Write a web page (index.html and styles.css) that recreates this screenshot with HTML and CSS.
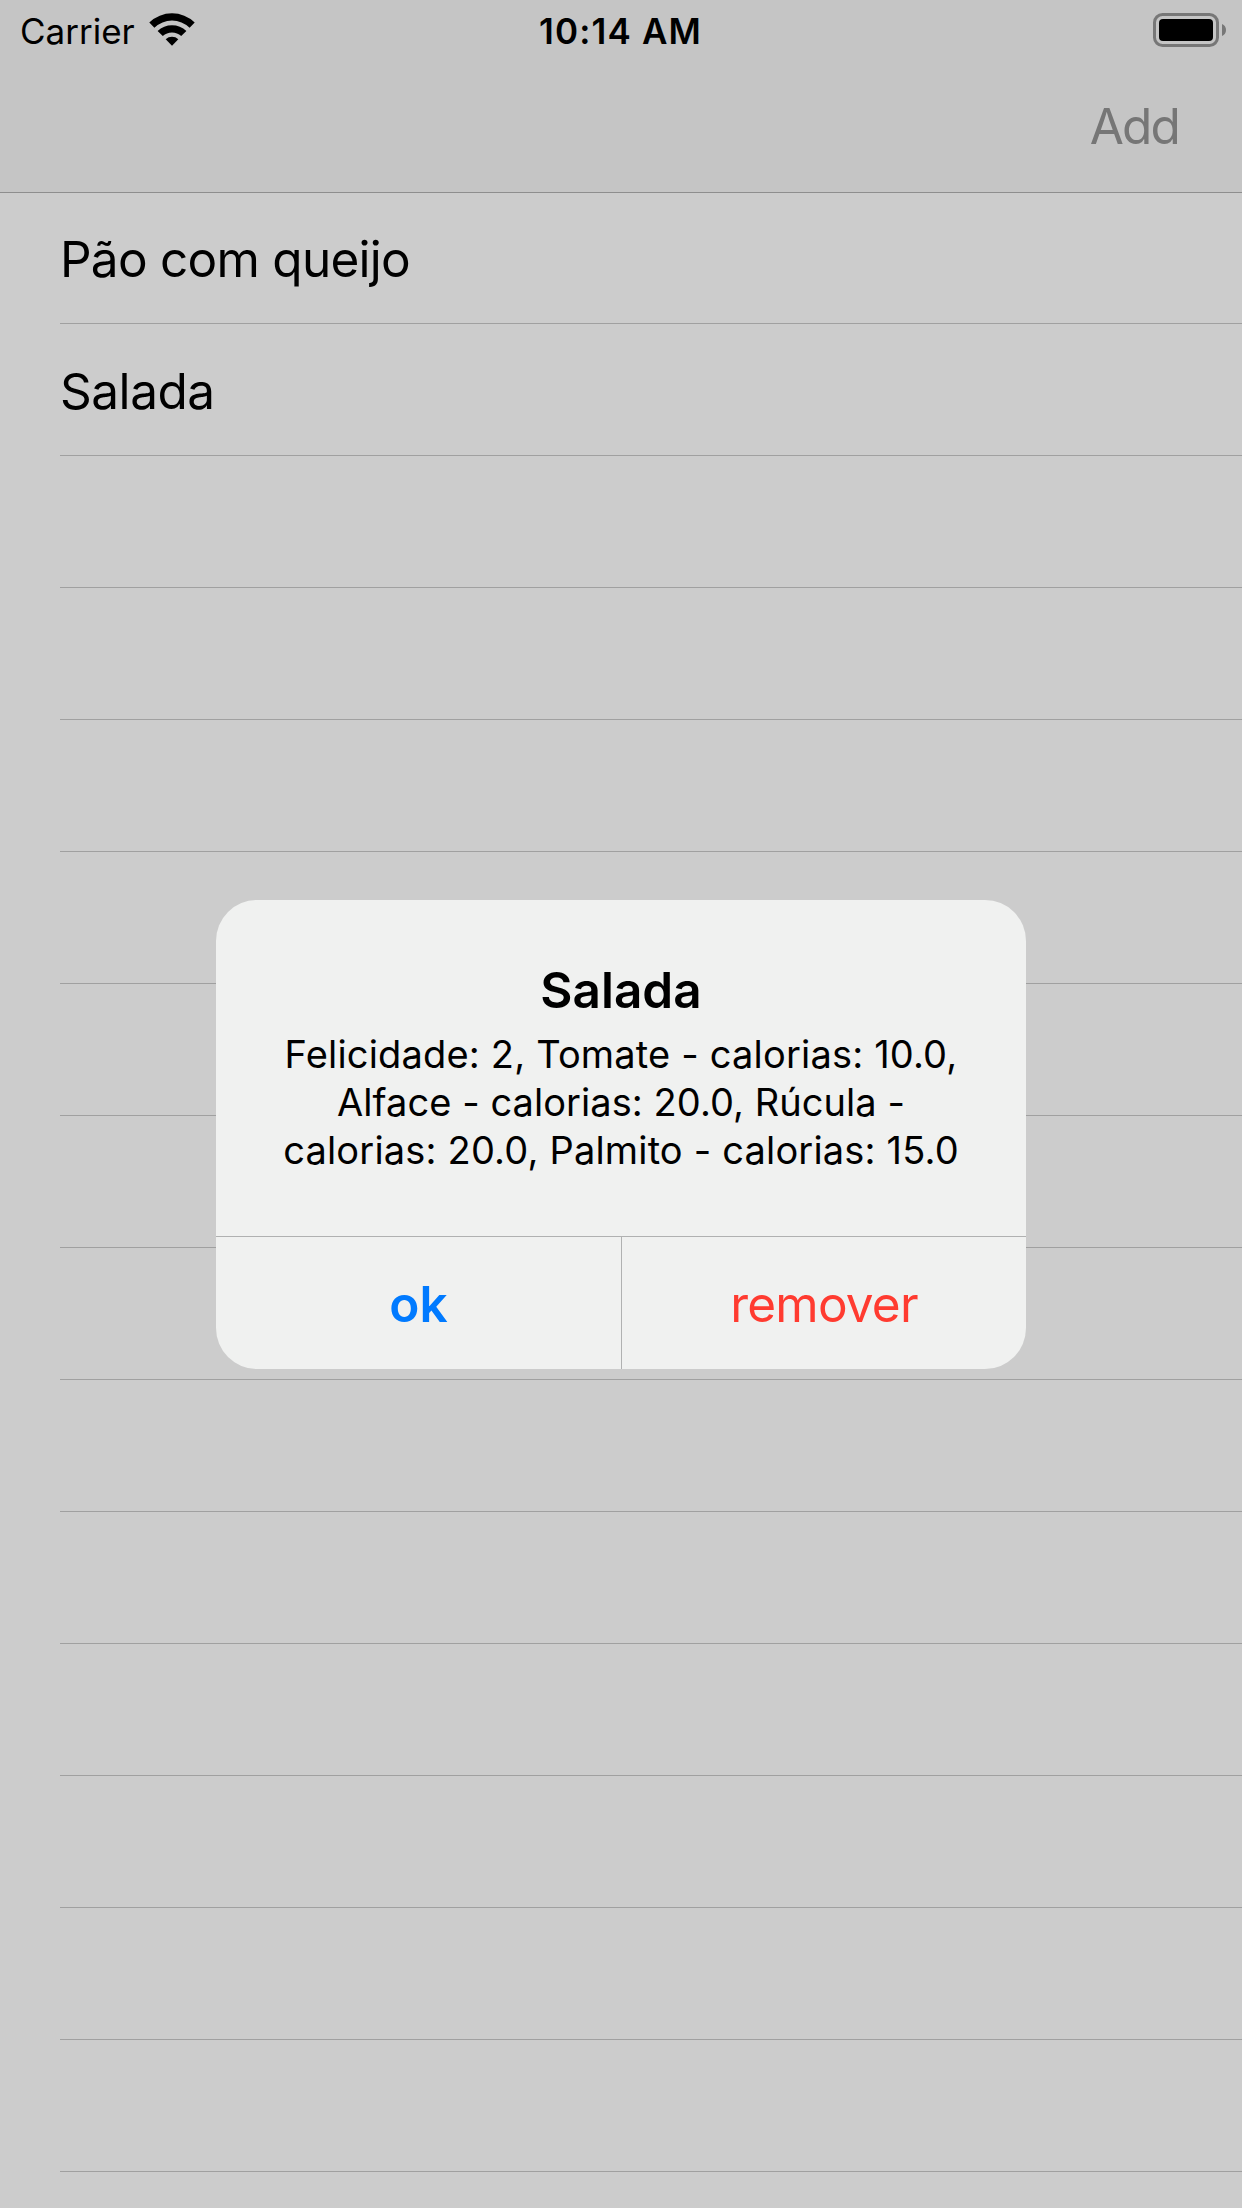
FILE: index.html
```html
<!DOCTYPE html>
<html lang="pt">
<head>
<meta charset="utf-8">
<title>Refeições</title>
<link rel="stylesheet" href="styles.css">
</head>
<body>
<div class="screen">
  <header class="header">
    <div class="status">
      <div class="status__left">
        <span class="status__carrier">Carrier</span>
        <svg class="status__wifi" width="46" height="34" viewBox="0 0 46 34">
          <path d="M0.3 9.4A33 33 0 0 1 45.7 9.4L40.6 14.7A25.4 25.4 0 0 0 5.4 14.7Z"/>
          <path d="M8.6 17.9A21 21 0 0 1 37.4 17.9L32.2 23.1A13.4 13.4 0 0 0 13.8 23.1Z"/>
          <path d="M16.7 26.2A9.2 9.2 0 0 1 29.3 26.2L23 32.7Z"/>
        </svg>
      </div>
      <span class="status__time">10:14 AM</span>
      <svg class="status__battery" width="74" height="34" viewBox="0 0 74 34">
        <rect class="battery__case" x="1.5" y="1.5" width="63" height="31" rx="8"/>
        <rect x="6" y="6" width="54" height="22" rx="4"/>
        <path class="battery__cap" d="M69 11C71.5 12 73 14 73 17S71.5 22 69 23Z"/>
      </svg>
    </div>
    <nav class="nav"><span class="nav__add">Add</span></nav>
  </header>
  <ul class="list">
    <li class="row row--long">Pão com queijo</li>
    <li class="row">Salada</li>
    <li class="row"></li><li class="row"></li><li class="row"></li><li class="row"></li>
    <li class="row"></li><li class="row"></li><li class="row"></li><li class="row"></li>
    <li class="row"></li><li class="row"></li><li class="row"></li><li class="row"></li>
    <li class="row"></li>
  </ul>
  <div class="overlay">
    <section class="alert" role="alertdialog">
      <div class="alert__body">
        <h2 class="alert__title">Salada</h2>
        <p class="alert__message">
          <span class="alert__line">Felicidade: 2, Tomate - calorias: 10.0,</span>
          <span class="alert__line alert__line--tight">Alface - calorias: 20.0, Rúcula -</span>
          <span class="alert__line">calorias: 20.0, Palmito - calorias: 15.0</span>
        </p>
      </div>
      <div class="alert__actions">
        <button class="action action--ok">ok</button>
        <button class="action action--remove">remover</button>
      </div>
    </section>
  </div>
</div>
</body>
</html>
```
FILE: styles.css
```css
* { box-sizing: border-box; margin: 0; padding: 0; }

body {
  background: #ccc;
  color: #000;
  font-family: Inter, "Liberation Sans", sans-serif;
}

.screen {
  position: relative;
  width: 1242px;
  height: 2208px;
  overflow: hidden;
}

.header {
  height: 193px;
  background: #c5c5c5;
  border-bottom: 1px solid #8e8e8e;
}

.status {
  display: grid;
  grid-template-columns: 1fr auto 1fr;
  height: 60px;
  padding: 0 21px 0 20px;
  font-size: 35px;
  line-height: 62px;
}

.status__left { display: flex; gap: 14px; }
.status__wifi { margin-top: 13px; }
.status__time { font-weight: 600; letter-spacing: 1.15px; }
.status__battery { justify-self: end; margin: 13px -6px 0 0; }
.battery__case { fill: none; stroke: #777; stroke-width: 3; }
.battery__cap { fill: #777; }

.nav {
  display: flex;
  justify-content: flex-end;
  height: 132px;
  padding-right: 63px;
  color: #767676;
  font-size: 49.5px;
  line-height: 132px;
  letter-spacing: -1.8px;
}

/* First row starts beneath the header's hairline */
.list { margin-top: -1px; padding-left: 60px; list-style: none; }

.row {
  height: 132px;
  border-bottom: 1px solid #a0a0a0;
  font-size: 49.5px;
  line-height: 134px;
  letter-spacing: -0.47px;
}
.row--long { letter-spacing: -0.74px; }

.overlay {
  position: absolute;
  inset: 0;
  display: flex;
  justify-content: center;
  align-items: flex-start;
  padding-top: 900px;
}

.alert {
  width: 810px;
  height: 469px;
  overflow: hidden;
  border-radius: 41px;
  background: #f0f1f0;
}

.alert__body {
  height: 337px;
  padding-top: 60px;
  border-bottom: 1px solid #b0b1b1;
  text-align: center;
}

.alert__title { font-size: 49.5px; font-weight: 600; line-height: 60px; }
.alert__message { margin-top: 10px; font-size: 38px; line-height: 48px; letter-spacing: 0.18px; }
.alert__line { display: block; white-space: nowrap; }
.alert__line--tight { letter-spacing: 0.06px; }

.alert__actions { display: grid; grid-template-columns: 406px 404px; height: 132px; }

.action {
  border: 0;
  background: none;
  font: 400 49.5px/134px Inter, "Liberation Sans", sans-serif;
}
.action--ok { border-right: 1px solid #b0b1b1; color: #007aff; font-weight: 600; }
.action--remove { color: #ff3b30; letter-spacing: -0.8px; }
```
